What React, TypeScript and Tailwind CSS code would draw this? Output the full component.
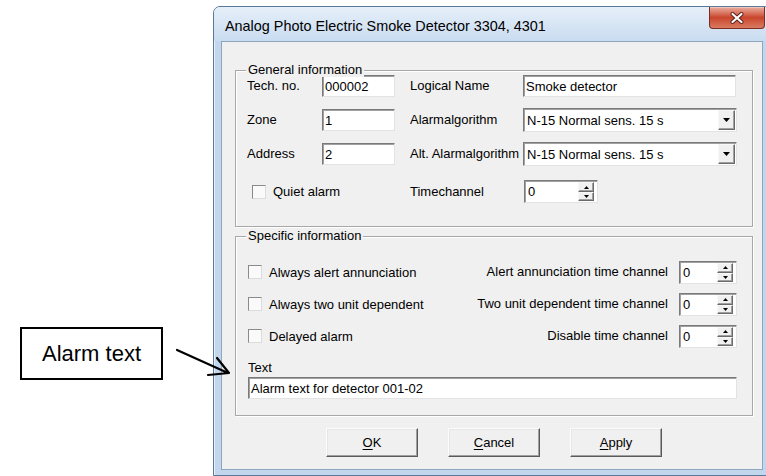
import type { ReactNode } from 'react'

// Win7-basic style property dialog for a smoke detector, with a callout pointing at the text field

function Field({ value, className = '' }: { value: string; className?: string }) {
  return (
    <div
      className={`flex h-[22px] items-center border border-t-[#7a7a7a] border-l-[#7a7a7a] border-r-[#e3e3e3] border-b-[#e3e3e3] bg-white pl-[2px] shadow-[inset_1px_1px_0_#a0a0a0] ${className}`}
    >
      <span className="leading-none">{value}</span>
    </div>
  )
}

function Raised({ children, className = '' }: { children?: ReactNode; className?: string }) {
  return (
    <div
      className={`flex items-center justify-center border border-t-[#f8f8f8] border-l-[#f8f8f8] border-r-[#6a6a6a] border-b-[#6a6a6a] bg-[#f0f0f0] shadow-[inset_-1px_-1px_0_#a0a0a0] ${className}`}
    >
      {children}
    </div>
  )
}

function Combo({ value }: { value: string }) {
  return (
    <div className="flex h-[24px] w-[214px] items-center border border-t-[#7a7a7a] border-l-[#7a7a7a] border-r-[#e3e3e3] border-b-[#e3e3e3] bg-white p-[1px] shadow-[inset_1px_1px_0_#a0a0a0]">
      <span className="flex-1 pl-[2px] leading-none">{value}</span>
      <Raised className="h-[20px] w-[17px]">
        <svg width="7" height="4" viewBox="0 0 7 4">
          <path d="M0 0h7L3.5 4z" fill="#000" />
        </svg>
      </Raised>
    </div>
  )
}

function Spin({ value, className = '' }: { value: string; className?: string }) {
  return (
    <div
      className={`flex h-[23px] items-center border border-t-[#7a7a7a] border-l-[#7a7a7a] border-r-[#e3e3e3] border-b-[#e3e3e3] bg-white p-[1px] shadow-[inset_1px_1px_0_#a0a0a0] ${className}`}
    >
      <span className="flex-1 pl-[2px] leading-none">{value}</span>
      <div className="mr-[2px] flex h-[19px] w-[16px] flex-col">
        <Raised className="h-[10px] w-[16px]">
          <svg width="5" height="3" viewBox="0 0 5 3">
            <path d="M2.5 0L5 3H0z" fill="#000" />
          </svg>
        </Raised>
        <Raised className="h-[9px] w-[16px]">
          <svg width="5" height="3" viewBox="0 0 5 3">
            <path d="M0 0h5L2.5 3z" fill="#000" />
          </svg>
        </Raised>
      </div>
    </div>
  )
}

function Check({ label }: { label: string }) {
  return (
    <div className="flex items-center">
      <span className="h-[14px] w-[14px] border border-t-[#8a8a8a] border-l-[#8a8a8a] border-r-[#dcdcdc] border-b-[#dcdcdc] bg-[#fafafa]" />
      <span className="ml-[7px] leading-none">{label}</span>
    </div>
  )
}

function Group({ title, className = '', children }: { title: string; className?: string; children: ReactNode }) {
  return (
    <div
      className={`relative ml-[13px] w-[518px] border border-[#a8a8a8] shadow-[inset_1px_1px_0_#fff,1px_1px_0_#fff] ${className}`}
    >
      <span className="absolute -top-[8px] left-[10px] bg-[#f0f0f0] px-[2px] leading-[14px]">{title}</span>
      {children}
    </div>
  )
}

function Btn({ mnemonic, rest }: { mnemonic: string; rest: string }) {
  return (
    <div className="flex h-[29px] w-[92px] items-center justify-center border border-t-[#fcfcfc] border-l-[#fcfcfc] border-r-[#5a5a5a] border-b-[#5a5a5a] bg-[#f0f0f0] shadow-[inset_-1px_-1px_0_#a0a0a0,inset_1px_1px_0_#e6e6e6]">
      <span className="leading-none">
        <span className="underline underline-offset-2">{mnemonic}</span>
        {rest}
      </span>
    </div>
  )
}

export default function App() {
  return (
    <div className="relative h-[476px] w-[766px] overflow-hidden bg-white font-['Liberation_Sans',Arial,sans-serif] text-[13px] text-black">
      {/* callout */}
      <div className="absolute left-[20px] top-[327px] flex h-[53px] w-[143px] items-center justify-center border-2 border-black bg-white">
        <span className="text-[22px] leading-none">Alarm text</span>
      </div>
      <svg className="absolute left-[170px] top-[343px]" width="70" height="40" viewBox="0 0 70 40">
        <path d="M7 7L58 30M47 15L59 30L38 32" fill="none" stroke="#000" strokeWidth="2.2" strokeLinecap="round" strokeLinejoin="round" />
      </svg>

      <div className="ml-[213px] pt-[6px]">
        <div className="flex h-[470px] w-[558px] flex-col rounded-t-[7px] border border-[#5b7898] bg-[#c2d7ee] shadow-[inset_1px_1px_0_#e8f1fb]">
          {/* title bar */}
          <div className="flex h-[34px] shrink-0 items-start justify-between rounded-t-[6px] bg-gradient-to-b from-[#e6eff9] to-[#c9dcf0]">
            <span className="mt-[12px] ml-[11px] text-[14.4px] leading-none">
              Analog Photo Electric Smoke Detector 3304, 4301
            </span>
            <div className="mr-[5px] flex h-[22px] w-[56px] items-center justify-center rounded-b-[4px] border border-t-0 border-[#7a2d20] bg-gradient-to-b from-[#e9ada0] via-[#c9452b] to-[#d97a62] shadow-[inset_0_1px_0_#f3c6bb]">
              <svg width="14" height="12" viewBox="0 0 14 12">
                <path d="M2.5 2L11.5 10M11.5 2L2.5 10" stroke="#5a1f16" strokeWidth="4" strokeLinecap="round" />
                <path d="M2.5 2L11.5 10M11.5 2L2.5 10" stroke="#fff" strokeWidth="2.2" strokeLinecap="round" />
              </svg>
            </div>
          </div>

          {/* client area */}
          <div className="mx-[7px] h-[429px] border border-[#8ea5c0] bg-[#f0f0f0]">
            <Group title="General information" className="mt-[28px] h-[157px]">
              <div className="flex flex-col pl-[11px] pt-[4px]">
                <div className="flex h-[22px] items-center">
                  <span className="w-[75px]">Tech. no.</span>
                  <Field value="000002" className="w-[73px]" />
                  <span className="ml-[15px] w-[113px]">Logical Name</span>
                  <Field value="Smoke detector" className="w-[213px]" />
                </div>
                <div className="mt-[12px] flex h-[22px] items-center">
                  <span className="w-[75px]">Zone</span>
                  <Field value="1" className="w-[73px]" />
                  <span className="ml-[15px] w-[113px]">Alarmalgorithm</span>
                  <Combo value="N-15 Normal sens. 15 s" />
                </div>
                <div className="mt-[12px] flex h-[22px] items-center">
                  <span className="w-[75px]">Address</span>
                  <Field value="2" className="w-[73px]" />
                  <span className="ml-[15px] w-[113px]">Alt. Alarmalgorithm</span>
                  <Combo value="N-15 Normal sens. 15 s" />
                </div>
                <div className="mt-[15px] flex h-[23px] items-center">
                  <div className="w-[148px] pl-[5px]">
                    <Check label="Quiet alarm" />
                  </div>
                  <span className="ml-[15px] w-[114px]">Timechannel</span>
                  <Spin value="0" className="w-[74px]" />
                </div>
              </div>
            </Group>

            <Group title="Specific information" className="mt-[9px] h-[180px]">
              <div className="flex flex-col pl-[12px] pr-[15px] pt-[24px]">
                <div className="flex h-[22px] items-center justify-between">
                  <Check label="Always alert annunciation" />
                  <div className="flex items-center">
                    <span>Alert annunciation time channel</span>
                    <Spin value="0" className="ml-[11px] w-[58px]" />
                  </div>
                </div>
                <div className="mt-[10px] flex h-[22px] items-center justify-between">
                  <Check label="Always two unit dependent" />
                  <div className="flex items-center">
                    <span>Two unit dependent time channel</span>
                    <Spin value="0" className="ml-[11px] w-[58px]" />
                  </div>
                </div>
                <div className="mt-[10px] flex h-[22px] items-center justify-between">
                  <Check label="Delayed alarm" />
                  <div className="flex items-center">
                    <span>Disable time channel</span>
                    <Spin value="0" className="ml-[11px] w-[58px]" />
                  </div>
                </div>
                <span className="mt-[14px] leading-[14px]">Text</span>
                <Field value="Alarm text for detector 001-02" className="mt-[2px] w-[489px]" />
              </div>
            </Group>

            <div className="ml-[104px] mt-[12px] flex gap-[30px]">
              <Btn mnemonic="O" rest="K" />
              <Btn mnemonic="C" rest="ancel" />
              <Btn mnemonic="A" rest="pply" />
            </div>
          </div>
        </div>
      </div>
    </div>
  )
}
